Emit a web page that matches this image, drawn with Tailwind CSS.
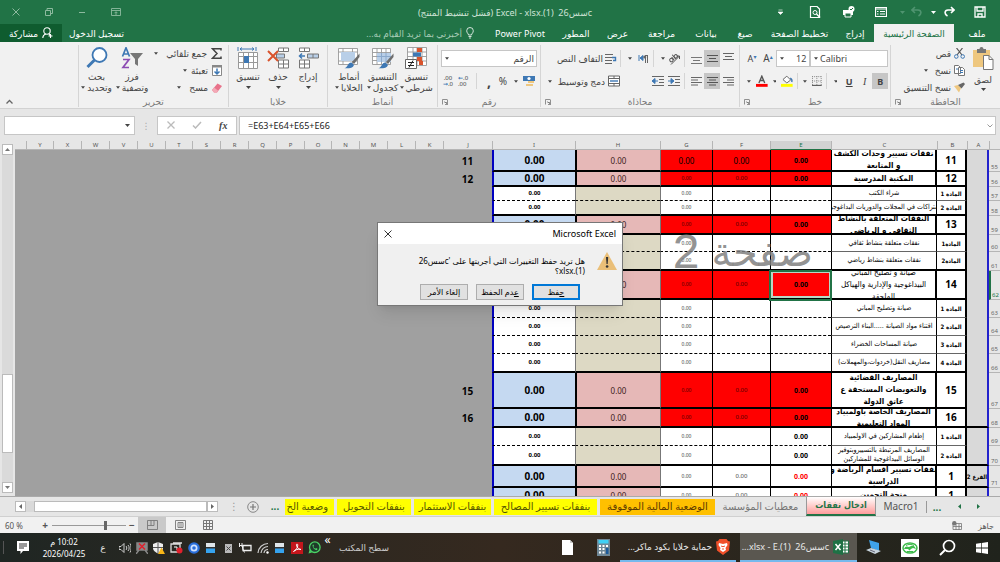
<!DOCTYPE html>
<html lang="ar" dir="rtl">
<head>
  <meta charset="UTF-8">
  <title>Excel</title>
  <script src="https://cdn.jsdelivr.net/npm/@tailwindcss/browser@4"></script>
</head>
<body class="flex flex-col h-screen overflow-hidden relative bg-[#e6e6e6] text-[#444] text-[9px] leading-[11px] whitespace-nowrap font-['Noto_Sans','DejaVu_Sans',sans-serif]">

<!-- Shared icons -->
<svg class="hidden">
  <symbol id="caret" viewBox="0 0 5 3"><path d="M0 0h5L2.5 3z" fill="currentColor"/></symbol>
  <symbol id="launcher" viewBox="0 0 6 6"><path d="M.5 5.500V.5H5M2.500 3.500h3v-3M5.500 3.500v2H3M2.500 2.500l3 3" fill="none" stroke="#777" stroke-width=".8"/></symbol>
  <symbol id="table" viewBox="0 0 20 20"><path d="M.5 1.500h18v16H.5zM.5 5.500h18M.5 9.500h18M.5 13.500h18M5 1.500v16M9.500 1.500v16M14 1.500v16" fill="#fff" stroke="#999" stroke-width=".9"/></symbol>
  <symbol id="brush" viewBox="0 0 16 16"><path d="M15.500.5 8 9l2 2 5.500-7z" fill="#6d6d6d"/><path d="M7.500 9.500 10 12c-1 3-4.500 3.500-9.500 3.300C4 14 4 9 7.500 9.500z" fill="#3e78b4"/></symbol>
</svg>

<!-- Title bar -->
<header class="flex items-center h-6 shrink-0 bg-[#217346] text-white">
  <div class="flex items-center w-[408px] pr-[14px]">
    <button class="w-3 ml-[19px]" aria-label="حفظ"><svg class="w-3 h-3" viewBox="0 0 12 12"><path d="M1 1h10v10H1zM3 1v4h6V1M4 11V8h4v3" fill="none" stroke="#fff" stroke-width="1.300"/></svg></button>
    <button class="w-3 ml-[7px]" aria-label="إعادة"><svg class="w-3 h-3" viewBox="0 0 12 12"><path d="M8 1l3 3-3 3M11 4H5C1.500 4 1 8 4.500 10" fill="none" stroke="#fff" stroke-width="1.600"/></svg></button>
    <svg class="w-[5px] h-[3px] ml-[8px]"><use href="#caret"/></svg>
    <button class="w-3 ml-[6px] text-[#4f9470]" aria-label="تراجع"><svg class="w-3 h-3" viewBox="0 0 12 12"><path d="M4 1L1 4l3 3M1 4h6c3.500 0 4 4 .5 6" fill="none" stroke="currentColor" stroke-width="1.600"/></svg></button>
    <svg class="w-[5px] h-[3px] ml-[13px] text-[#4f9470]"><use href="#caret"/></svg>
    <button class="w-3 ml-[20px]" aria-label="نموذج"><svg class="w-3 h-3" viewBox="0 0 12 12"><path d="M.5 1.500h11v9H.5zM.5 3h11" fill="none" stroke="#fff" stroke-width="1.200"/><path d="M2 5.500h1.500M5 5.500h5M2 8h1.500M5 8h5" stroke="#fff"/></svg></button>
    <button class="w-[13px] ml-[21px]" aria-label="طباعة سريعة"><svg class="w-[13px] h-3" viewBox="0 0 13 12"><path d="M1 4h10v5H1z" fill="#fff"/><path d="M3 7h6v4H3z" fill="#217346" stroke="#fff"/><circle cx="9.500" cy="3" r="3" fill="#fff"/><path d="M8 3l1 1 2-2" stroke="#217346" fill="none"/></svg></button>
    <button class="w-3 ml-[26px]" aria-label="معاينة"><svg class="w-3 h-3" viewBox="0 0 12 12"><path d="M1.500.5H8L10.500 3v8.500h-9z" fill="none" stroke="#fff" stroke-width="1.200"/><circle cx="6" cy="6.500" r="2" fill="none" stroke="#fff"/><path d="M7.500 8l3.500 3.500" stroke="#fff" stroke-width="1.400"/></svg></button>
    <svg class="w-[5px] h-[6px]" viewBox="0 0 5 6"><path d="M.5 1h4M0 3h5L2.500 5.500z" fill="#fff" stroke="#fff" stroke-width=".6"/></svg>
  </div>
  <h1 class="flex-1 text-[#cfe3d7]">c&rlm;سس26&nbsp; (1).&rlm;xlsx&rlm; - Excel (فشل تنشيط المنتج)</h1>
  <div class="flex items-center gap-[25px] pl-[12px] text-[#8dba9f]">
    <svg class="w-[10px] h-2" viewBox="0 0 10 8"><path d="M.5.5h9v7h-9zM.5 2.500h9M5 7V4M3.500 5.200 5 3.700l1.500 1.500" fill="none" stroke="currentColor" stroke-width=".9"/></svg>
    <svg class="w-2 h-2" viewBox="0 0 8 8"><path d="M1 4.500h6" stroke="currentColor"/></svg>
    <svg class="w-2 h-2" viewBox="0 0 8 8"><path d="M.5 2.500h5v5h-5zM2 2.500v-2h5.500v5h-2" fill="none" stroke="currentColor"/></svg>
    <svg class="w-2 h-2" viewBox="0 0 8 8"><path d="M.5.5l7 7M7.500.5l-7 7" stroke="currentColor"/></svg>
  </div>
</header>

<!-- Ribbon tabs -->
<nav class="flex items-center h-[18px] shrink-0 bg-[#217346] text-white">
  <button class="w-[46px]">ملف</button>
  <button class="w-20 h-full bg-[#f1f1f1] text-[#217346]">الصفحة الرئيسية</button>
  <button class="w-[38px]">إدراج</button>
  <button class="w-[73px]">تخطيط الصفحة</button>
  <button class="w-9">صيغ</button>
  <button class="w-[42px]">بيانات</button>
  <button class="w-[47px]">مراجعة</button>
  <button class="w-[41px]">عرض</button>
  <button class="w-[42px]">المطور</button>
  <button class="w-[70px]">Power Pivot</button>
  <button class="flex items-center gap-1 pr-[11px] text-[#a6cbb5]">
    <svg class="w-2 h-3" viewBox="0 0 8 12"><path d="M2.500 8C2.500 6.500.7 6 .7 3.800a3.300 3.300 0 0 1 6.600 0C7.300 6 5.500 6.500 5.500 8zM2.500 9.500h3M3 11h2" fill="none" stroke="#fff" stroke-width=".8"/></svg>
    أخبرني بما تريد القيام به...
  </button>
  <button class="mr-auto px-[7px]">تسجيل الدخول</button>
  <button class="flex items-center justify-center gap-1 w-[62px] h-full bg-[#0f5c2f]">
    <svg class="w-[11px] h-3" viewBox="0 0 11 12"><circle cx="5" cy="4" r="3.200" fill="none" stroke="#fff" stroke-width="1.100"/><path d="M.8 11c0-2.500 1.500-3.500 3-4M7 7l2 2M8.500 7v4M6.500 9h4" fill="none" stroke="#fff" stroke-width="1.100"/></svg>
    مشاركة
  </button>
</nav>

<!-- Ribbon -->
<section class="flex h-[67px] shrink-0 bg-[#f1f1f1] border-b border-[#d2d2d2] pt-[3px] pb-px [&>div]:border-l [&>div]:border-[#d5d5d5] [&>div]:flex [&>div]:flex-col">
  <!-- Clipboard -->
  <div class="w-[110px]">
    <div class="flex flex-1 pr-[5px]">
      <button class="flex flex-col items-center w-6">
        <svg class="w-[22px] h-6 mt-px" viewBox="0 0 22 24"><path d="M1 4h17v17H1z" fill="#eec77f"/><path d="M5 3h2.500a2 2 0 0 1 4 0H14v4H5z" fill="#777"/><path d="M11.500 9.500H17l4 4v10h-9.500z" fill="#fff" stroke="#777"/><path d="M17 9.500v4h4" fill="none" stroke="#777"/></svg>
        <span class="mt-1">لصق</span>
        <svg class="w-[5px] h-[3px] mt-[3px]"><use href="#caret"/></svg>
      </button>
      <div class="flex flex-col justify-around h-[51px] pr-[6px]">
        <button class="flex items-center gap-[3px]"><svg class="w-[11px] h-[11px]" viewBox="0 0 11 11"><path d="M2.500 0 8 7M8.500 0 3 7" stroke="#555" stroke-width="1.200"/><circle cx="2.300" cy="8.500" r="1.800" fill="none" stroke="#3e78b4"/><circle cx="8.700" cy="8.500" r="1.800" fill="none" stroke="#3e78b4"/></svg>قص</button>
        <button class="flex items-center gap-[3px]"><svg class="w-[11px] h-[11px]" viewBox="0 0 11 11"><path d="M.5.5h4l2 2v6h-6zM4.500 2.500h4l2 2v6h-6z" fill="#fff" stroke="#777"/><path d="M2 4h2M6 5.500h3M6 7.500h3" stroke="#3e78b4"/></svg>نسخ<svg class="w-1 h-[3px] mr-1"><use href="#caret"/></svg></button>
        <button class="flex items-center gap-[3px]"><svg class="w-[11px] h-[11px]" viewBox="0 0 11 11"><path d="M0 4l4-1 3 3-2 4.500z" fill="#eec77f"/><path d="M4 3l3.500 3.500L11 2 9.500.5z" fill="#666"/></svg>نسخ التنسيق</button>
      </div>
    </div>
    <div class="flex justify-center relative text-[#777]">الحافظة<svg class="absolute left-1 top-[3px] w-[6px] h-[6px]"><use href="#launcher"/></svg></div>
  </div>

  <!-- Font -->
  <div class="w-[151px]">
    <div class="flex-1 px-[2px] pt-[5px]">
      <div class="flex items-center h-[17px]">
        <label class="relative flex w-[78px] h-full" dir="ltr">
          <select aria-label="الخط" class="appearance-none w-full h-full pl-[9px] bg-white border border-[#c6c6c6]"><option>Calibri</option></select>
          <svg class="absolute left-1 top-[7px] w-1 h-[3px]"><use href="#caret"/></svg>
        </label>
        <label class="relative flex w-[34px] h-full" dir="ltr">
          <select aria-label="حجم الخط" class="appearance-none w-full h-full pl-[19px] bg-white border border-[#c6c6c6]"><option>12</option></select>
          <svg class="absolute left-1 top-[7px] w-1 h-[3px]"><use href="#caret"/></svg>
        </label>
        <button class="w-4 text-[10px]" dir="ltr">A<sup class="text-[#3e78b4] text-[6px]">▴</sup></button>
        <button class="w-4 text-[9px]" dir="ltr">A<sup class="text-[#3e78b4] text-[6px]">▾</sup></button>
      </div>
      <div class="flex items-center h-4 mt-[6px]">
        <button class="w-4 h-full bg-[#c6c6c6] font-bold">B</button>
        <button class="w-4 italic font-['Liberation_Serif',serif] text-[10px]">I</button>
        <button class="w-4 underline font-bold">U</button>
        <svg class="w-1 h-[3px] mx-[4px]"><use href="#caret"/></svg>
        <i class="w-px h-full bg-[#d5d5d5] mx-[3px]"></i>
        <svg class="w-[10px] h-[10px] mx-px" viewBox="0 0 10 10"><path d="M0 .5h10M.5 0v10M9.500 0v10M5 0v10M0 5h10" stroke="#888" stroke-dasharray="1 1"/><path d="M0 9.500h10" stroke="#444"/></svg>
        <svg class="w-1 h-[3px] mx-[4px]"><use href="#caret"/></svg>
        <i class="w-px h-full bg-[#d5d5d5] mr-px ml-[4px]"></i>
        <svg class="w-3 h-3" viewBox="0 0 12 12"><path d="M2 4.500 6 1l4 4-4 3z" fill="#fff" stroke="#666"/><path d="M9.500 3c2 1 2 3 1.500 4" stroke="#3e78b4" stroke-width="1.500" fill="none"/><path d="M0 9h12v3H0z" fill="#ff0"/></svg>
        <svg class="w-1 h-[3px] mx-[5px]"><use href="#caret"/></svg>
        <svg class="w-3 h-3" viewBox="0 0 12 12"><path d="M3 8l3-7 3 7M4 5.500h4" fill="none" stroke="#555" stroke-width="1.400"/><path d="M0 9h12v3H0z" fill="#f00"/></svg>
        <svg class="w-1 h-[3px] mx-[5px]"><use href="#caret"/></svg>
      </div>
    </div>
    <div class="flex justify-center relative text-[#777]">خط<svg class="absolute left-1 top-[3px] w-[6px] h-[6px]"><use href="#launcher"/></svg></div>
  </div>

  <!-- Alignment -->
  <div class="w-[199px]">
    <div class="flex-1 pr-[3px] pt-[5px]">
      <div class="flex items-center h-[17px]">
        <button class="flex justify-center w-4"><svg class="w-[11px] h-[11px]" viewBox="0 0 11 11"><path d="M0 .5h11M2 3.500h7M0 6.500h11" stroke="#666"/></svg></button>
        <button class="flex justify-center items-center w-4 h-full bg-[#c6c6c6]"><svg class="w-[11px] h-[11px]" viewBox="0 0 11 11"><path d="M0 2.500h11M2 5.500h7M0 8.500h11" stroke="#555"/></svg></button>
        <button class="flex justify-center w-4"><svg class="w-[11px] h-[11px]" viewBox="0 0 11 11"><path d="M0 4.500h11M2 7.500h7M0 10.500h11" stroke="#777"/></svg></button>
        <i class="w-px h-full bg-[#d5d5d5] mr-[3px] ml-[4px]"></i>
        <svg class="w-3 h-3 overflow-visible" viewBox="0 0 12 12"><path d="M3 11.500 11.500 3M11.500 3v3M11.500 3h-3" stroke="#555" fill="none"/><g transform="rotate(-40 5 5)" fill="none" stroke="#555"><circle cx="2.500" cy="5.500" r="1.700"/><path d="M4.500 3.500v4M6.500 2v5.500"/><circle cx="8.200" cy="5.500" r="1.700"/></g></svg>
        <svg class="w-1 h-[3px] mx-[3px]"><use href="#caret"/></svg>
        <i class="w-px h-full bg-[#d5d5d5] mr-[4px] ml-[5px]"></i>
        <svg class="w-[10px] h-[10px]" viewBox="0 0 10 10"><path d="M1 1v6M2 4l3-2.500v5z" fill="#3e78b4" stroke="#3e78b4"/><path d="M7.500 9V1.500M9.500 9V1.500M10 1.500H7" stroke="#666" fill="none"/><circle cx="6.800" cy="3" r="1.500" fill="#666"/></svg>
        <svg class="w-1 h-[3px] mr-[6px] ml-[4px]"><use href="#caret"/></svg>
        <i class="w-px h-full bg-[#d5d5d5] mx-[3px]"></i>
        <button class="flex items-center gap-[2px]"><svg class="w-3 h-3" viewBox="0 0 12 12"><path d="M0 1.500h8M0 4.500h7M0 7.500h7M0 10.500h7" stroke="#666"/><path d="M7 4.500h3.500v3H8" stroke="#3e78b4" stroke-width="1.400" fill="none"/></svg>التفاف النص</button>
      </div>
      <div class="flex items-center h-4 mt-[6px]">
        <button class="flex justify-center w-4"><svg class="w-[11px] h-[11px]" viewBox="0 0 11 11"><path d="M0 1.500h11M4 4h7M0 6.500h11M4 9h7" stroke="#666"/></svg></button>
        <button class="flex justify-center items-center w-4 h-full bg-[#c6c6c6]"><svg class="w-[11px] h-[11px]" viewBox="0 0 11 11"><path d="M0 1.500h11M2 4h7M0 6.500h11M2 9h7" stroke="#555"/></svg></button>
        <button class="flex justify-center w-4"><svg class="w-[11px] h-[11px]" viewBox="0 0 11 11"><path d="M0 1.500h11M0 4h7M0 6.500h11M0 9h7" stroke="#666"/></svg></button>
        <i class="w-px h-full bg-[#d5d5d5] mr-[3px] ml-[4px]"></i>
        <svg class="w-3 h-[10px]" viewBox="0 0 12 10"><path d="M0 .5h12M7 3.500h5M7 6.500h5M0 9.500h12" stroke="#666"/><path d="M0 5h3V2.500L6 5 3 7.500V5" fill="#3e78b4" stroke="#3e78b4"/></svg>
        <svg class="w-3 h-[10px] mr-1" viewBox="0 0 12 10"><path d="M0 .5h12M7 3.500h5M7 6.500h5M0 9.500h12" stroke="#666"/><path d="M6 5H3V2.500L0 5l3 2.500V5" fill="#3e78b4" stroke="#3e78b4"/></svg>
        <button class="flex items-center gap-[3px] mr-[32px]"><svg class="w-3 h-3" viewBox="0 0 12 12"><path d="M.5 1h11v10H.5zM.5 3.500h11M.5 8.500h11M6 1v2.500M6 8.500V11" stroke="#666" fill="#fff"/><path d="M2 6h8" stroke="#3e78b4" stroke-width="1.400"/></svg>دمج وتوسيط<svg class="w-1 h-[3px] mr-[3px]"><use href="#caret"/></svg></button>
      </div>
    </div>
    <div class="flex justify-center relative text-[#777]">محاذاة<svg class="absolute left-1 top-[3px] w-[6px] h-[6px]"><use href="#launcher"/></svg></div>
  </div>

  <!-- Number -->
  <div class="w-[103px]">
    <div class="flex-1 px-[3px] pt-[5px]">
      <label class="relative flex h-[17px]">
        <select aria-label="تنسيق الأرقام" class="appearance-none w-full h-full pr-[2px] bg-white border border-[#c6c6c6]"><option>الرقم</option></select>
        <svg class="absolute left-1 top-[7px] w-1 h-[3px]"><use href="#caret"/></svg>
      </label>
      <div class="flex items-center h-4 mt-[6px] pr-[2px]">
        <svg class="w-3 h-3" viewBox="0 0 12 12"><path d="M0 1h12v5H0z" fill="#3e78b4"/><circle cx="6" cy="3.500" r="1.600" fill="#fff"/><path d="M5 6h6v2H5zM3 9h7v2H3z" fill="#eec77f"/></svg>
        <svg class="w-1 h-[3px] mx-[5px]"><use href="#caret"/></svg>
        <button class="w-3 text-[10px]">%</button>
        <button class="w-4 font-bold text-[14px]">,</button>
        <i class="w-px h-full bg-[#d5d5d5] mr-1 ml-[6px]"></i>
        <button class="w-3 text-[6px] leading-[6px] text-left" dir="ltr"><b class="text-[#3e78b4]">←</b>.0<br>.00</button>
        <button class="w-3 mr-1 text-[6px] leading-[6px]" dir="ltr">.00<br><b class="text-[#3e78b4]">→</b>.0</button>
      </div>
    </div>
    <div class="flex justify-center relative text-[#777]">رقم<svg class="absolute left-1 top-[3px] w-[6px] h-[6px]"><use href="#launcher"/></svg></div>
  </div>

  <!-- Styles -->
  <div class="w-[110px]">
    <div class="flex flex-1 justify-between px-1">
      <button class="flex flex-col items-center w-[34px] pt-[2px]">
        <svg class="w-[22px] h-[22px]" viewBox="0 0 22 22"><path d="M2.500.5h19v18h-19zM2.500 5h19M2.500 9.500h19M2.500 14h19M8 .5v18M12 .5v18M17 .5v18" fill="#fff" stroke="#999" stroke-width=".9"/><path d="M12 1h5v4h-5zM12 10h5v4h-5zM14 14h4v4h-4z" fill="#d9532c"/><path d="M8 5.500h8v4H8z" fill="#3e78b4"/><path d="M.5 12.500h11v9H.5z" fill="#fff" stroke="#666"/><path d="M3 15.500h6M3 18.500h6M8 13.500l-4 7" stroke="#222"/></svg>
        <span class="mt-[2px]">تنسيق<br><span class="inline-flex items-center gap-[2px]">شرطي<svg class="w-1 h-[3px]"><use href="#caret"/></svg></span></span>
      </button>
      <button class="flex flex-col items-center w-[34px] pt-[2px]">
        <svg class="w-[22px] h-[22px]" viewBox="0 0 22 22"><use href="#table" width="20" height="20"/><path d="M5 6h14v9H5z" fill="#b9cfe8"/><path d="M5 9.500h14M9.500 6v9M14 6v9" stroke="#8ba9cc"/><use href="#brush" x="6" y="6" width="16" height="16"/></svg>
        <span class="mt-[2px]">التنسيق<br><span class="inline-flex items-center gap-[2px]">كجدول<svg class="w-1 h-[3px]"><use href="#caret"/></svg></span></span>
      </button>
      <button class="flex flex-col items-center w-[34px] pt-[2px]">
        <svg class="w-[22px] h-[22px]" viewBox="0 0 22 22"><path d="M.5 1.500h19v16H.5zM.5 5h19M5 1.500v16M14.500 1.500v16M.5 14h19" fill="#fff" stroke="#999" stroke-width=".9"/><path d="M3 5h14v9H3z" fill="#b9cfe8"/><use href="#brush" x="6" y="6" width="16" height="16"/></svg>
        <span class="mt-[2px]">أنماط<br><span class="inline-flex items-center gap-[2px]">الخلايا<svg class="w-1 h-[3px]"><use href="#caret"/></svg></span></span>
      </button>
    </div>
    <div class="text-center text-[#777]">أنماط</div>
  </div>

  <!-- Cells -->
  <div class="w-[99px]">
    <div class="flex flex-1 justify-between px-1">
      <button class="flex flex-col items-center w-[30px] pt-[2px]">
        <svg class="w-[22px] h-[22px]" viewBox="0 0 22 22"><path d="M2.500 1h10v3.500h-10zM7.500 1v3.500M2.500 13h10v8h-10zM2.500 17h10M7.500 13v8" fill="#fff" stroke="#777"/><path d="M10.500 7h11v4h-11zM16 7v4" fill="#b9cfe8" stroke="#777"/><path d="M8 9H3M5 6.500 2.500 9 5 11.500" fill="none" stroke="#3e78b4" stroke-width="1.500"/></svg>
        <span class="mt-[2px]">إدراج</span><svg class="w-[5px] h-[3px] mt-1"><use href="#caret"/></svg>
      </button>
      <button class="flex flex-col items-center w-[30px] pt-[2px]">
        <svg class="w-[22px] h-[22px]" viewBox="0 0 22 22"><path d="M11.500 1h10v3.500h-10zM16.500 1v3.500M11.500 13h10v8h-10zM11.500 17h10M16.500 13v8" fill="#fff" stroke="#777"/><path d="M9.500 7h8v4h-8z" fill="#b9cfe8" stroke="#777"/><path d="M1 4l10 10M11 4 1 14" stroke="#d9532c" stroke-width="2"/></svg>
        <span class="mt-[2px]">حذف</span><svg class="w-[5px] h-[3px] mt-1"><use href="#caret"/></svg>
      </button>
      <button class="flex flex-col items-center w-[30px] pt-[2px]">
        <svg class="w-[22px] h-[22px]" viewBox="0 0 22 22"><path d="M1.500 5.500h19v16h-19zM1.500 9.500h19M1.500 15.500h19M6.500 5.500v16M11.500 5.500v16M16.500 5.500v16" fill="#fff" stroke="#999"/><path d="M7 9h5v7H7z" fill="#3e78b4"/><path d="M3 2h14M5 .5 3 2l2 1.500M15 .5 17 2l-2 1.500M1 0v4M19 0v4" fill="none" stroke="#3e78b4"/></svg>
        <span class="mt-[2px]">تنسيق</span><svg class="w-[5px] h-[3px] mt-1"><use href="#caret"/></svg>
      </button>
    </div>
    <div class="text-center text-[#777]">خلايا</div>
  </div>

  <!-- Editing -->
  <div class="w-[150px]">
    <div class="flex flex-1 pr-[6px]">
      <div class="flex flex-col justify-around w-[72px] h-[51px]">
        <button class="flex items-center gap-1"><svg class="w-[11px] h-[11px]" viewBox="0 0 11 11"><path d="M10 2.500V.8H1.500L6 5.500 1.500 10.200H10V8.500" fill="none" stroke="#444" stroke-width="1.500"/></svg>جمع تلقائي<svg class="w-1 h-[3px] mr-1"><use href="#caret"/></svg></button>
        <button class="flex items-center gap-1"><svg class="w-[10px] h-[11px]" viewBox="0 0 10 11"><path d="M.5.5h9v10h-9z" fill="#fff" stroke="#888"/><path d="M0 0h10v2.500H0z" fill="#888"/><path d="M5 3.500V9M2.500 6.500 5 9l2.500-2.500" fill="none" stroke="#3e78b4" stroke-width="1.500"/></svg>تعبئة<svg class="w-1 h-[3px]"><use href="#caret"/></svg></button>
        <button class="flex items-center gap-1"><svg class="w-[10px] h-[10px]" viewBox="0 0 10 10"><path d="M0 7 5.500.5 10 3 5 9.500H2z" fill="#e8728a"/><path d="M0 7l2-2.500 4 3L5 9.500H2z" fill="#f3a9b6"/></svg>مسح<svg class="w-1 h-[3px] mr-1"><use href="#caret"/></svg></button>
      </div>
      <button class="flex flex-col items-center w-[36px] pt-[2px]">
        <svg class="w-[22px] h-[22px]" viewBox="0 0 22 22"><path d="M1.500 9.500 5 .8l3.500 8.700M2.700 7h4.600" fill="none" stroke="#3e78b4" stroke-width="1.700"/><path d="M2 12.500h6L2 20.500h6" fill="none" stroke="#8c4bb3" stroke-width="1.700"/><path d="M9 6h13l-5 6v7l-3-2v-5z" fill="#777"/></svg>
        <span class="mt-[2px]">فرز<br><span class="inline-flex items-center gap-[2px]">وتصفية<svg class="w-1 h-[3px]"><use href="#caret"/></svg></span></span>
      </button>
      <button class="flex flex-col items-center w-[35px] pt-[2px]">
        <svg class="w-[22px] h-[22px]" viewBox="0 0 22 22"><circle cx="13.500" cy="8" r="7" fill="#fff" stroke="#3e78b4" stroke-width="1.800"/><path d="M8.500 13 1.500 20" stroke="#3e78b4" stroke-width="3"/></svg>
        <span class="mt-[2px]">بحث<br><span class="inline-flex items-center gap-[2px]">وتحديد<svg class="w-1 h-[3px]"><use href="#caret"/></svg></span></span>
      </button>
    </div>
    <div class="text-center text-[#777]">تحرير</div>
  </div>
  <button class="mr-auto ml-[6px] self-end mb-[3px]" aria-label="طي الشريط"><svg class="w-[7px] h-[5px]" viewBox="0 0 7 5"><path d="M.5 4.500l3-3 3 3" fill="none" stroke="#666" stroke-width="1.300"/></svg></button>
</section>

<!-- Formula bar -->
<section class="flex items-center h-8 shrink-0 px-1">
  <label class="relative flex flex-1 h-[19px]" dir="ltr">
    <input aria-label="شريط الصيغة" value="=E63+E64+E65+E66" class="w-full px-2 bg-white border border-[#c6c6c6] text-[9px] text-[#222]">
    <svg class="absolute right-[3px] top-2 w-[6px] h-1" viewBox="0 0 6 4"><path d="M.5.5 3 3 5.500.5" fill="none" stroke="#999"/></svg>
  </label>
  <div class="flex items-center justify-around w-20 h-[19px] mr-[2px] bg-white border border-[#c6c6c6]">
    <button class="italic text-[10px] font-bold font-['Liberation_Serif',serif]">fx</button>
    <svg class="w-[10px] h-2" viewBox="0 0 10 8"><path d="M1 4.500 3.500 7 9 1" fill="none" stroke="#bbb" stroke-width="1.500"/></svg>
    <svg class="w-2 h-2" viewBox="0 0 8 8"><path d="M.5.5l7 7M7.500.5l-7 7" stroke="#bbb" stroke-width="1.300"/></svg>
  </div>
  <span class="w-[22px] text-center text-[#aaa]">⋮</span>
  <label class="relative flex w-[131px] h-[19px]" dir="ltr">
    <input aria-label="مربع الاسم" class="w-full bg-white border border-[#c6c6c6]">
    <svg class="absolute right-[5px] top-2 w-[5px] h-[3px]"><use href="#caret"/></svg>
  </label>
</section>

<!-- Sheet -->
<main class="flex flex-1 min-h-0">
  <div class="relative flex-1 overflow-hidden bg-[#a0a0a0]">
    <table class="table-fixed border-separate border-spacing-0 w-[994px] text-black text-center">
      <colgroup id="cols"></colgroup>
      <thead class="bg-[#e6e6e6] text-[#555] text-[6px] leading-[8px]"><tr id="letters"></tr></thead>
      <tbody id="rows"></tbody>
    </table>
    <div class="absolute right-[187px] top-[86px] flex items-center gap-3 text-[#808080]/85 leading-[50px] font-['Liberation_Sans','DejaVu_Sans',sans-serif]">
      <span class="text-[40px]">صفحة</span><span class="text-[48px]">2</span>
    </div>
  </div>
  <div class="flex flex-col w-[15px] py-[3px] px-[2px]">
    <button class="flex items-center justify-center h-[11px] bg-white border border-[#bbb] text-[#777]"><svg class="w-[5px] h-[3px] rotate-180"><use href="#caret"/></svg></button>
    <div class="flex-1 flex flex-col bg-[#dadada]"><div class="mt-auto mb-[29px] h-[79px] bg-white border border-[#bbb]"></div></div>
    <button class="flex items-center justify-center h-[11px] bg-white border border-[#bbb] text-[#777]"><svg class="w-[5px] h-[3px]"><use href="#caret"/></svg></button>
  </div>
</main>

<!-- Sheet tabs -->
<nav class="flex items-center h-[21px] shrink-0 border-t border-[#aaa] border-b border-b-[#d0d0d0] text-[10px]">
  <button class="w-[33px] pr-[10px] flex justify-center text-[#217346]"><svg class="w-[3px] h-[5px]" viewBox="0 0 3 5"><path d="M0 0v5l3-2.500z" fill="currentColor"/></svg></button>
  <button class="w-[20px] pr-[6px] flex justify-start text-[#217346]"><svg class="w-[3px] h-[5px]" viewBox="0 0 3 5"><path d="M3 0v5L0 2.500z" fill="currentColor"/></svg></button>
  <button class="w-[21px] h-3 leading-[8px] font-bold text-[#217346] border-l border-[#999]">...</button>
  <button class="w-[50px] text-[#555]">Macro1</button>
  <button class="w-[70px] h-full bg-linear-to-b from-white to-[#ff9c9c] border-x border-[#999] border-b-2 border-b-[#217346] font-bold text-[9px] text-[#217346] font-['DejaVu_Sans_Condensed','DejaVu_Sans',sans-serif]">ادخال نفقات</button>
  <button class="w-[91px] text-[#777]">معطيات المؤسسة</button>
  <button class="w-[115px] ml-[3px] h-4 bg-[#ffc000] text-[#5c3a00]">الوضعية المالية الموقوفة</button>
  <button class="w-[103px] ml-[3px] h-4 bg-[#ff0] text-[#555500]">بنفقات تسيير المصالح</button>
  <button class="w-[77px] ml-[3px] h-4 bg-[#ff0] text-[#555500]">بنفقات الاستثمار</button>
  <button class="w-[74px] ml-[3px] h-4 bg-[#ff0] text-[#555500]">بنفقات التحويل</button>
  <button class="w-[49px] h-4 pr-[6px] overflow-hidden text-right bg-[#ff0] text-[#555500]">وضعية الخ</button>
  <span class="w-[20px] text-center font-bold text-[#217346]">...</span>
  <button class="w-6 flex justify-center" aria-label="ورقة جديدة"><svg class="w-3 h-3" viewBox="0 0 12 12"><circle cx="6" cy="6" r="5.300" fill="none" stroke="#888"/><path d="M6 3v6M3 6h6" stroke="#777" stroke-width="1.200"/></svg></button>
  <span class="w-[14px] text-center text-[#999]">⋮</span>
  <div class="flex flex-1 h-[11px] ml-[15px] mr-[9px] bg-[#dadada]">
    <button class="flex items-center justify-center w-[11px] bg-white border border-[#bbb] text-[#666]"><svg class="w-[3px] h-[5px]" viewBox="0 0 3 5"><path d="M0 0v5l3-2.500z" fill="currentColor"/></svg></button>
    <div class="flex-1 ml-2 bg-white border border-[#bbb]"></div>
    <button class="flex items-center justify-center w-[11px] bg-white border border-[#bbb] text-[#666]"><svg class="w-[3px] h-[5px]" viewBox="0 0 3 5"><path d="M3 0v5L0 2.500z" fill="currentColor"/></svg></button>
  </div>
</nav>

<!-- Status bar -->
<footer class="flex items-center h-4 shrink-0 pr-[6px] bg-[#f1f1f1] text-[#555] text-[8px]">
  <span>جاهز</span>
  <svg class="w-[10px] h-[9px] mr-4" viewBox="0 0 10 9"><path d="M1 2.500h8.500v6H1zM1 5.500h8.500M4 3v6M7 3v6" fill="none" stroke="#777" stroke-width=".8"/><circle cx="2.300" cy="2.300" r="2.200" fill="#777"/></svg>
  <div class="flex items-center h-full mr-auto">
    <button class="flex justify-center w-7"><svg class="w-[10px] h-[10px]" viewBox="0 0 10 10"><path d="M.5.5h9v9h-9zM.5 3.500h9M.5 6.500h9M3.500.5v9M6.500.5v9" fill="none" stroke="#777"/></svg></button>
    <button class="flex justify-center w-7"><svg class="w-[11px] h-[10px]" viewBox="0 0 11 10"><path d="M.5.5h10v9H.5zM3 2.500h5v5H3zM4 4h3M4 6h3" fill="none" stroke="#777" stroke-width=".9"/></svg></button>
    <button class="flex items-center justify-center w-7 h-full bg-[#c9c9c9]"><svg class="w-[11px] h-[10px]" viewBox="0 0 11 10"><path d="M.5.5h10v9H.5zM4 .5v5M7 .5v5H.5" fill="none" stroke="#777" stroke-width=".9"/></svg></button>
    <span class="w-3 text-center text-[10px] font-bold">−</span>
    <input type="range" aria-label="تكبير/تصغير" min="10" max="400" value="115" class="appearance-none w-[74px] h-px bg-[#999] [&::-webkit-slider-thumb]:appearance-none [&::-webkit-slider-thumb]:w-[3px] [&::-webkit-slider-thumb]:h-[9px] [&::-webkit-slider-thumb]:bg-[#666]">
    <span class="w-[14px] text-center text-[10px] font-bold">+</span>
    <span class="w-[38px] pl-[5px] text-left" dir="ltr">60 %</span>
  </div>
</footer>

<!-- Taskbar -->
<footer class="flex items-center h-[29px] shrink-0 bg-linear-to-r from-[#1f2623] via-[#35291f] to-[#20231c] text-[#e8e8e8] text-[9px]">
  <button class="w-[36px] flex justify-center" aria-label="ابدأ"><svg class="w-3 h-3" viewBox="0 0 12 12"><path d="M0 1.700 5 1v4.600H0zM5.700.9 12 0v5.600H5.700zM0 6.400h5V11l-5-.7zM5.700 6.400H12V12l-6.300-.9z" fill="#fff"/></svg></button>
  <button class="w-[34px] flex justify-center" aria-label="بحث"><svg class="w-[17px] h-[17px]" viewBox="0 0 17 17"><circle cx="10" cy="7" r="5.500" fill="none" stroke="#fff" stroke-width="1.700"/><path d="M6 11 1 16" stroke="#fff" stroke-width="2"/></svg></button>
  <button class="w-[40px] flex justify-center"><svg class="w-[18px] h-[18px]" viewBox="0 0 18 18"><path d="M0 0h18v18H0z" fill="#fff"/><ellipse cx="9" cy="9" rx="7" ry="5" fill="none" stroke="#3dbb4a" stroke-width="1.500"/><path d="M3 10c1-3 3-3 5-2l2-1c2-1 4 0 5 3l-3-1-2 1-1.500 1.500L7 10z" fill="#3dbb4a"/><path d="M5 6.500c2.500-1.500 5.500-1.500 8 0M6 12.500h6" stroke="#3dbb4a" fill="none"/></svg></button>
  <button class="w-[33px] flex justify-center"><svg class="w-4 h-[15px]" viewBox="0 0 16 15"><path d="M3 0 13 3v8L5 8z" fill="#3fa3ea"/><path d="M0 10l5-2 10 3-6 3z" fill="#c8d4dd"/><path d="M4 10l5 2" stroke="#667"/></svg></button>
  <button class="flex items-center gap-1 w-[117px] h-full px-[8px] bg-[#5a5750] border-b-2 border-[#76b9ed]">
    <svg class="w-4 h-4 shrink-0" viewBox="0 0 16 16"><path d="M9 2h6.500v12H9z" fill="#fff" stroke="#217346"/><path d="M9 5h6M9 8h6M9 11h6M12 2v12" stroke="#217346"/><path d="M0 2 10 0v16L0 14z" fill="#1e7145"/><path d="M2.500 5l5 6M7.500 5l-5 6" stroke="#fff" stroke-width="1.500"/></svg>
    <span>c&rlm;سس26&nbsp; (1).&rlm;<bdi>xlsx - E</bdi>...</span>
  </button>
  <button class="flex items-center gap-1 w-[116px] h-full mr-[4px] px-[6px] border-b-2 border-[#76b9ed]">
    <svg class="w-[14px] h-4 shrink-0" viewBox="0 0 14 16"><path d="M3.500 0h7L12 2l2 .5-1 9L7 16l-6-4.500L0 2.500 2 2z" fill="#f0502a"/><path d="M3 4l4 1 4-1 .5 2L9.500 9l.5 2-3 2-3-2 .5-2L2.500 6z" fill="#fff"/><path d="M5 7l2 .7L9 7M6 10h2" stroke="#f0502a" fill="none"/></svg>
    <span>حماية خلايا بكود ماكر...</span>
  </button>
  <button class="w-[33px] flex justify-center"><svg class="w-[13px] h-[17px]" viewBox="0 0 13 17"><path d="M0 0h13v17H0z" fill="#6f8796"/><path d="M1.500 1h10v3.500h-10z" fill="#3fd0f5"/><path d="M2 7h2M5.500 7h2M2 10h2M5.500 10h2M2 13.500h2M5.500 13.500h2M9 7h2" stroke="#fff" stroke-width="2"/><path d="M9 9h2.500v6H9z" fill="#1c5a9a"/></svg></button>
  <button class="w-[40px] flex justify-center"><svg class="w-[11px] h-[15px]" viewBox="0 0 11 15"><path d="M0 0h8l3 3v12H0z" fill="#fff"/><path d="M8 0v3h3" fill="#ccc"/></svg></button>
  <span class="mr-auto pl-[5px] text-[#ccc]">سطح المكتب</span>
  <span class="w-[13px] pb-4 text-center text-[12px] text-white" dir="ltr">«</span>
  <div class="flex items-center gap-[5px]">
    <svg class="w-[13px] h-[13px]" viewBox="0 0 13 13"><circle cx="6.800" cy="6.200" r="5.300" fill="#1f3a2a" stroke="#4ad366" stroke-width="1.300"/><path d="M.5 12.500l1-3.500 2.500 2.500z" fill="#4ad366"/><path d="M4.500 4c0 3 2 5 4.500 5.200l.5-1.500-1.500-.7-.7.700c-1-.5-1.500-1-2-2l.7-.7-.6-1.500z" fill="#4ad366"/></svg>
    <svg class="w-3 h-3" viewBox="0 0 12 12"><path d="M0 0h12v12H0z" fill="#c4161c"/><path d="M2.500 9.500C7 7 7.500 2 6 2s0 5 4 5.500C7 6.500 4 8 2.500 9.500z" fill="none" stroke="#fff"/></svg>
    <svg class="w-3 h-3" viewBox="0 0 12 12"><path d="M1 1h9v10H1z" fill="#dfe6ea"/><path d="M1 6h9v5H1z" fill="#36a3ee"/><path d="M1 5h9v1.500H1z" fill="#333"/></svg>
    <svg class="w-3 h-3" viewBox="0 0 12 12"><path d="M1 11a10 10 0 0 1 10-9.500M4 11a7 7 0 0 1 7-6.500M7 11a4 4 0 0 1 4-3.500" fill="none" stroke="#ccc" stroke-width="1.200"/><circle cx="10.500" cy="10.500" r="1.200" fill="#fff"/></svg>
    <svg class="w-[13px] h-3" viewBox="0 0 12 12"><path d="M3.500 3.500h8v5h-8z" fill="none" stroke="#eee" stroke-width="1.300"/><path d="M0 1v4M2.500 1v4M0 3.500h3v3l2 4" stroke="#eee" fill="none"/></svg>
    <svg class="w-3 h-3" viewBox="0 0 12 12"><path d="M3 2h7v9H3z" fill="#b9b9b9"/><path d="M4.500 4.500l4 4M8.500 4.500l-4 4" stroke="#444"/></svg>
    <svg class="w-3 h-3" viewBox="0 0 12 12"><path d="M1 1h9v10H1z" fill="#dfe6ea"/><path d="M1 6h9v5H1z" fill="#36a3ee"/><path d="M1 5h9v1.500H1z" fill="#333"/></svg>
    <svg class="w-3 h-3" viewBox="0 0 12 12"><circle cx="6" cy="6" r="5.800" fill="#2a6fdb"/><circle cx="6" cy="6" r="3.500" fill="#cfe1ff"/><circle cx="6" cy="6" r="1.800" fill="#2a6fdb"/></svg>
    <svg class="w-[13px] h-3" viewBox="0 0 13 12"><path d="M1 2h9v8H1zM3 1h9" fill="none" stroke="#ddd" stroke-width="1.300"/><path d="M4 5h3v3" stroke="#fff" fill="none"/><circle cx="9.500" cy="8.500" r="3" fill="#e0202c"/></svg>
    <svg class="w-3 h-3" viewBox="0 0 12 12"><path d="M5 0 10 2v4c0 3-3 4.500-5 5.500C3 10.500 0 9 0 6V2z" fill="#eee"/><path d="M5 0v11.500M0 5.500h10" stroke="#555"/><path d="M8.500 5.500 12 12H5z" fill="#f8b617"/></svg>
    <svg class="w-3 h-3" viewBox="0 0 12 12"><path d="M1 1h10v7H1zM0 12l3-4M12 12 9 8" fill="#888" stroke="#888" stroke-width="1.500"/><path d="M3 1.500l6 6M9 1.500l-6 6" stroke="#e0202c" stroke-width="1.500"/></svg>
    <svg class="w-3 h-3" viewBox="0 0 12 12"><path d="M0 4.500h2L5 1.500v9L2 7.500H0zM7 4c1 1 1 3 0 4M9 3c1.500 1.500 1.500 4.500 0 6M11 1.500c1.500 2 1.500 7 0 9" fill="none" stroke="#ddd" stroke-width=".9"/></svg>
  </div>
  <span class="w-[32px] text-center">ع</span>
  <time class="w-[46px] text-center text-[8px] leading-[12px] text-white" datetime="2026-04-25T22:02">10:02 م<br><span dir="ltr">2026/04/25</span></time>
  <button class="flex justify-center w-[38px] border-l border-[#555] ml-[3px]" aria-label="الإشعارات"><svg class="w-3 h-[13px]" viewBox="0 0 12 13"><path d="M0 0h12v10H6l-2.500 3v-3H0z" fill="#fff"/><path d="M2 3h8M2 5h8M2 7h5" stroke="#333"/></svg></button>
</footer>

<!-- Save dialog -->
<dialog open class="absolute left-[377px] right-auto top-[222px] m-0 w-[246px] bg-[#f0f0f0] text-black border border-[#777] shadow-lg">
  <div class="flex items-center justify-between h-[21px] px-[6px] bg-white">
    <h2>Microsoft Excel</h2>
    <button aria-label="إغلاق"><svg class="w-2 h-2" viewBox="0 0 8 8"><path d="M.5.5l7 7M7.500.5l-7 7" stroke="#333"/></svg></button>
  </div>
  <div class="flex gap-3 pt-2 pr-[5px]">
    <svg class="w-5 h-[18px]" viewBox="0 0 20 18"><path d="M10 0 20 18H0z" fill="#eabf78"/><path d="M9 5h2.200l-.5 7H9.500z" fill="#333"/><circle cx="10.100" cy="14.500" r="1.300" fill="#333"/></svg>
    <p class="leading-[10px] pt-1 text-[8px]">هل تريد حفظ التغييرات التي أجريتها على 'c&rlm;سس26<br>(1).&rlm;xlsx&rlm;؟</p>
  </div>
  <div class="flex gap-2 pr-[42px] pt-2 pb-[5px] text-[8px]">
    <button class="w-12 h-4 bg-[#e1e1e1] border-2 border-[#0078d7] leading-[10px]"><u>ح</u>فظ</button>
    <button class="w-12 h-4 bg-[#e1e1e1] border border-[#adadad] leading-[10px]"><u>ع</u>دم الحفظ</button>
    <button class="w-12 h-4 bg-[#e1e1e1] border border-[#adadad] leading-[10px]">إلغاء الأمر</button>
  </div>
</dialog>

<script>
  // column letter and width
  const columns = [['', 11], ['A', 22], ['B', 30], ['C', 106], ['E', 61], ['F', 58], ['G', 52], ['H', 85], ['I', 83], ['J', 49]];
  'KLMNOPQRSTUVWXY'.split('').forEach((letter, i) => columns.push([letter, i % 5 === 4 ? 27 : 28]));
  columns.push(['', 20]);

  // n: row number, h: height, type, b: label in B, c: text in C
  const rows = [
    { n: 55, h: 22, type: 'head', b: '11', j: '11', c: 'نفقات تسيير وحدات الكشف<br>و المتابعة', big: true },
    { n: 56, h: 15, type: 'head', b: '12', j: '12', c: 'المكتبة المدرسية' },
    { n: 57, h: 14, type: 'item', b: 'المادة 1', c: 'شراء الكتب' },
    { n: 58, h: 15, type: 'item', b: 'المادة 2', c: 'شتراكات في المجلات والدوريات البداغوجية', last: true },
    { n: 59, h: 19, type: 'head', b: '13', c: 'النفقات المتعلقة بالنشاط<br>الثقافي و الرياضي' },
    { n: 60, h: 17, type: 'item', b: 'المادة1', c: 'نفقات متعلقة بنشاط ثقافي' },
    { n: 61, h: 19, type: 'item', b: 'المادة2', c: 'نفقات متعلقة بنشاط رياضي', last: true },
    { n: 62, h: 29, type: 'head', b: '14', c: 'صيانة و تصليح المباني<br>البيداغوجية والإدارية والهياكل<br>الملحقة', thin: true, selected: true },
    { n: 63, h: 18, type: 'item', b: 'المادة 1', c: 'صيانة وتصليح المباني' },
    { n: 64, h: 18, type: 'item', b: 'المادة 2', c: 'اقتناء مواد الصيانة .....البناء الترصيص' },
    { n: 65, h: 18, type: 'item', b: 'المادة 3', c: 'صيانة المساحات الخضراء' },
    { n: 66, h: 19, type: 'item', b: 'المادة 4', c: 'مصاريف النقل(خردوات،والمهملات)', last: true },
    { n: 67, h: 36, type: 'head', b: '15', j: '15', c: 'المصاريف القضائية<br>والتعويضات المستحقة ع<br>عاتق الدولة' },
    { n: 68, h: 19, type: 'head', b: '16', j: '16', c: 'المصاريف الخاصة باولمبياد<br>المواد التعليمية' },
    { n: 69, h: 18, type: 'item', b: 'المادة 1', c: 'إطعام المشاركين في الاولمبياد', e: true },
    { n: 70, h: 20, type: 'item', b: 'المادة 2', c: 'المصاريف المرتبطة بالتسييروبتوفير<br>الوسائل البيداغوجية للمشاركين', e: true, last: true },
    { n: 71, h: 22, type: 'open', a: 'الفرع 2', b: '1', c: 'نفقات تسيير أقسام الرياضة و<br>الدراسية' },
    { n: 72, h: 16, type: 'open', b: '1', c: 'منحة التحمين' }
  ];

  document.getElementById('cols').innerHTML = columns.map(c => `<col style="width:${c[1]}px">`).join('');
  document.getElementById('letters').innerHTML = columns.map(c =>
    `<th class="h-[9px] p-0 font-normal border-l border-b border-[#b5b5b5] ${c[0] === 'E' ? 'bg-[#d2d2d2] text-[#217346] border-b-[#217346]' : ''}">${c[0]}</th>`).join('');

  function cell(row, cls, text) {
    return `<td class="p-0 ${cls}"><div class="flex items-center justify-center overflow-hidden" style="height:${row.h - row.line}px">${text ? `<span>${text}</span>` : ''}</div></td>`;
  }

  function renderRow(row) {
    const head = row.type === 'head';
    const item = row.type === 'item';
    const solid = !item || row.last;
    row.line = solid ? 2 : 1;
    const bottom = solid ? 'border-b-2 border-b-black' : 'border-b border-b-black [border-bottom-style:dashed]';
    const label = solid ? 'border-b-2 border-b-black' : 'border-b border-b-[#666]';
    const red = head ? 'bg-[#f00]' : 'bg-white';
    const small = head ? 'text-[#4a0000]' : 'text-[#444]';
    const closing = row.n === 68 || row.n >= 70;
    let html = `<th class="p-0 align-bottom font-normal bg-[#e6e6e6] border-b border-[#b5b5b5] text-[6px] leading-[8px] ${row.selected ? 'text-[#217346] border-l-2 border-l-[#217346]' : 'text-[#666]'}">${row.n}</th>`;
    html += cell(row, `bg-[#d9d9d9] border-r-2 border-r-[#2222cc] text-[6px] font-bold font-['DejaVu_Sans_Condensed','DejaVu_Sans',sans-serif] ${closing ? 'border-b-2 border-b-black' : ''}`, row.a);
    html += cell(row, `bg-white border-r-2 border-r-black ${label} font-bold ${item ? "text-[6px] font-['DejaVu_Sans_Condensed','DejaVu_Sans',sans-serif]" : 'text-[10px]'}`, row.b);
    html += cell(row, `bg-white ${label} font-['DejaVu_Sans_Condensed','DejaVu_Sans',sans-serif] ${item ? 'border-x border-x-black text-[7px] leading-[9px]' : 'border-r-2 border-r-black border-l border-l-black text-[8px] leading-[12px]'} ${!item && !row.thin ? 'font-bold' : 'font-medium'}`, row.c);
    html += cell(row, `${red} ${bottom} border-l border-l-black text-[7px] font-bold ${row.type === 'open' ? 'text-[#f00]' : ''} ${row.selected ? 'relative outline-2 outline-[#217346] -outline-offset-1 inset-ring-2 inset-ring-[#b9d8c4]' : ''}`, !item || row.e ? '0.00' : '');
    html += cell(row, `${red} ${bottom} border-l border-l-black ${row.big ? 'text-[8px]' : 'text-[6px] ' + small}`, !item ? '0.00' : '');
    html += cell(row, `${red} ${bottom} border-l border-l-[#777] ${row.big ? 'text-[8px]' : 'text-[5px] ' + small}`, '0.00');
    html += cell(row, `${item ? 'bg-[#ddd9c4]' : 'bg-[#e6b8b7]'} ${bottom} text-[8px] text-[#402020] ${item ? 'border-l border-l-[#777]' : 'border-l-2 border-l-black'}`, !item ? '0.00' : '');
    html += cell(row, `${item ? 'bg-white text-[6px]' : 'bg-[#c5d9f1] text-[10px]'} ${bottom} border-l-2 border-l-[#0000c0] font-bold`, '0.00');
    html += cell(row, 'font-bold text-[10px]', row.j);
    return `<tr>${html}</tr>`;
  }

  document.getElementById('rows').innerHTML = rows.map(renderRow).join('');
</script>

</body>
</html>
